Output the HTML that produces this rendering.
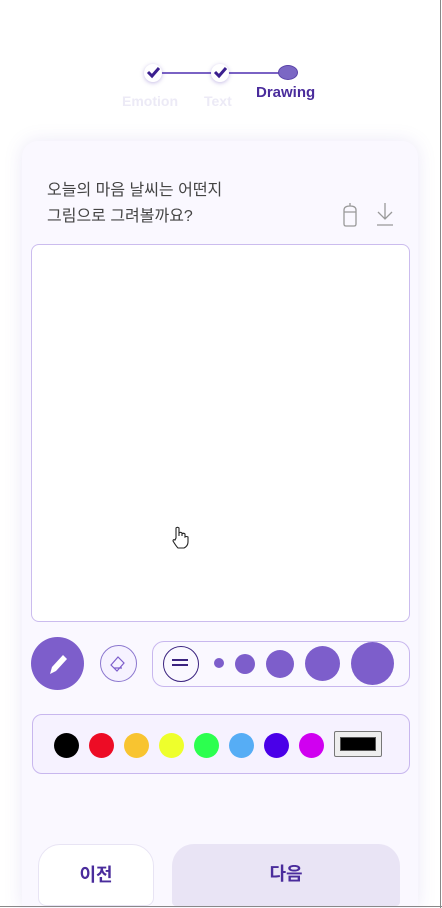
<!DOCTYPE html><html style="height:908px;overflow:hidden"><head><meta charset="utf-8"><style>
body{margin:0;width:442px;height:908px;background:#fff;position:relative;overflow:hidden;font-family:"Liberation Sans","Noto Sans CJK KR",sans-serif}
.a{position:absolute}
.card{left:22px;top:141px;width:396px;height:767px;background:#faf8ff;border-radius:16px 16px 0 0;box-shadow:0 0 18px rgba(120,100,200,.15)}
.chk{width:18px;height:18px;border-radius:50%;background:#fff;box-shadow:0 1px 4px rgba(90,60,180,.35)}
.dot{border-radius:50%;background:#7d5ecb}
.c{width:25px;height:25px;border-radius:50%;top:733px}
</style></head><body>
<div class="a" style="left:153px;top:72px;width:134px;height:2px;background:#7a62c4"></div>
<div class="a chk" style="left:144px;top:64px"></div>
<div class="a chk" style="left:211px;top:64px"></div>
<svg class="a" style="left:144px;top:64px" width="85" height="18"><path d="M4 8l4 4 7-8" stroke="#3b1f8f" stroke-width="3" fill="none"/><path d="M71 8l4 4 7-8" stroke="#3b1f8f" stroke-width="3" fill="none"/></svg>
<div class="a" style="left:278px;top:65px;width:18px;height:13px;border-radius:50%;background:#7b67c4;border:1px solid #5a43a8"></div>
<div class="a" style="left:122px;top:93px;font-size:14px;font-weight:bold;color:#eceaf6">Emotion</div>
<div class="a" style="left:204px;top:93px;font-size:14px;font-weight:bold;color:#eceaf6">Text</div>
<div class="a" style="left:256px;top:84px;font-size:15px;font-weight:bold;color:#4a2c9c">Drawing</div>
<div class="a card"></div>
<div class="a" style="right:1px;top:0;width:1px;height:908px;background:#888"></div>
<div class="a" style="left:0;top:906px;width:442px;height:1px;background:#888"></div>
<div class="a" style="left:47px;top:178px;font-size:16px;line-height:26px;color:#444">오늘의 마음 날씨는 어떤지<br>그림으로 그려볼까요?</div>
<svg class="a" style="left:340px;top:200px" width="60" height="28" fill="none" stroke="#999" stroke-width="1.3"><path d="M4 10q0-4 6-4t6 4v14q0 2-2 2h-8q-2 0-2-2z M4 12h12 M10 6v-3"/><path d="M45 3v16 M38 12l7 7 7-7 M37 25h16"/></svg>
<div class="a" style="left:31px;top:244px;width:377px;height:376px;background:#fff;border:1px solid #cbbcee;border-radius:8px"></div>
<svg class="a" style="left:170px;top:525px" width="20" height="24" fill="#fff" stroke="#222" stroke-width="1.1"><path d="M6 13V3q1.5-1.5 3 0v8V8q1.5-1.5 3 0v3V9q1.5-1.5 3 0v3q1.5-1 3 0v5q0 4-4 6h-6q-2-2-5-7q0-2 2-1z"/></svg>
<div class="a dot" style="left:31px;top:637px;width:53px;height:53px"></div>
<svg class="a" style="left:44px;top:650px" width="28" height="28"><path d="M6 24l2-7 11-12 4 4-11 12z" fill="#fff"/></svg>
<div class="a" style="left:100px;top:645px;width:35px;height:35px;border-radius:50%;border:1px solid #8c78cf;background:#f6f2ff"></div>
<svg class="a" style="left:108px;top:653px" width="20" height="20" fill="none" stroke="#7d5ecb" stroke-width="1.2"><path d="M3 12l7-8 6 6-7 8z M6 15h8"/></svg>
<div class="a" style="left:152px;top:641px;width:256px;height:44px;border:1px solid #c8b7ee;border-radius:12px"></div>
<div class="a" style="left:163px;top:646px;width:34px;height:34px;border-radius:50%;border:1px solid #3b237f"></div>
<div class="a" style="left:172px;top:659px;width:16px;height:2px;background:#3b237f;box-shadow:0 5px 0 #3b237f"></div>
<div class="a dot" style="left:214px;top:658px;width:10px;height:10px"></div>
<div class="a dot" style="left:235px;top:654px;width:20px;height:20px"></div>
<div class="a dot" style="left:266px;top:650px;width:28px;height:28px"></div>
<div class="a dot" style="left:305px;top:646px;width:35px;height:35px"></div>
<div class="a dot" style="left:351px;top:642px;width:43px;height:43px"></div>
<div class="a" style="left:32px;top:714px;width:376px;height:58px;border:1px solid #c8b7ee;border-radius:10px;background:#f6f2ff"></div>
<div class="a c" style="left:54px;background:#000"></div>
<div class="a c" style="left:89px;background:#ed0c25"></div>
<div class="a c" style="left:124px;background:#f8c430"></div>
<div class="a c" style="left:159px;background:#eeff2c"></div>
<div class="a c" style="left:194px;background:#2cff4f"></div>
<div class="a c" style="left:229px;background:#56adf5"></div>
<div class="a c" style="left:264px;background:#4a00e8"></div>
<div class="a c" style="left:299px;background:#d000f0"></div>
<div class="a" style="left:334px;top:731px;width:46px;height:24px;border:1px solid #777;border-radius:2px;background:#eee"></div>
<div class="a" style="left:340px;top:737px;width:34px;height:12px;background:#000;border:1px solid #555"></div>
<div class="a" style="left:38px;top:844px;width:114px;height:60px;background:#fff;border:1px solid #e8e4f4;border-radius:22px 22px 8px 8px;font-size:18px;font-weight:bold;color:#4a2c9c;text-align:center;line-height:60px">이전</div>
<div class="a" style="left:172px;top:844px;width:228px;height:62px;background:#e9e4f5;border-radius:22px 22px 4px 4px;font-size:18px;font-weight:bold;color:#4a2c9c;text-align:center;line-height:60px">다음</div>
</body></html>
